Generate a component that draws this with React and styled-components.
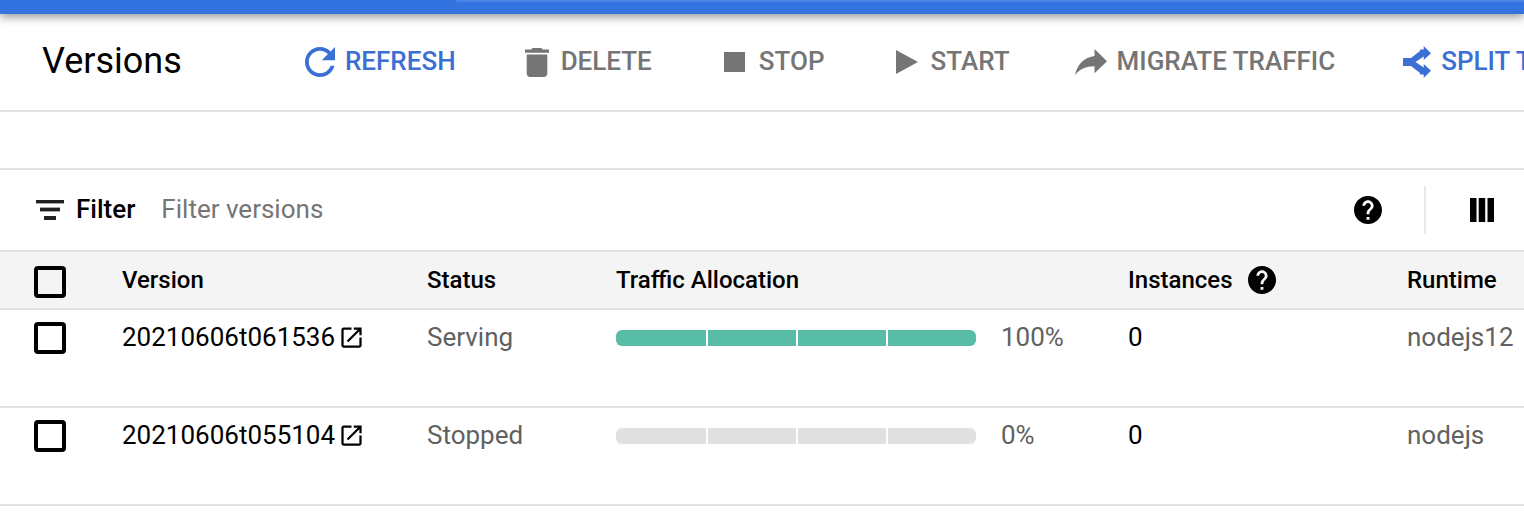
import React from "react";
import styled, { createGlobalStyle } from "styled-components";

const Global = createGlobalStyle`
  html, body { margin: 0; padding: 0; background: #fff; }
  body { font-family: Roboto, "Liberation Sans", sans-serif; overflow: hidden; width: 1524px; height: 530px; }
`;

const Page = styled.div`
  width: 1524px;
  height: 530px;
  overflow: hidden;
  position: relative;
`;

const TopBar = styled.div`
  height: 14px;
  background: #3273e0;
  box-shadow: 0 3px 10px rgba(0, 0, 0, 0.42);
  position: relative;
  &::after {
    content: "";
    position: absolute;
    left: 456px;
    right: 0;
    top: 0;
    height: 2px;
    background: #4a85e6;
    border-bottom-left-radius: 4px;
  }
`;

const Toolbar = styled.div`
  height: 96px;
  display: flex;
  align-items: center;
  border-bottom: 2px solid #e0e0e0;
  white-space: nowrap;
`;

const Title = styled.h1`
  margin: 0 0 2px;
  width: 305px;
  flex: none;
  box-sizing: border-box;
  padding-left: 42px;
  font-size: 36px;
  font-weight: 400;
  color: #000;
`;

const Action = styled.div`
  display: flex;
  align-items: center;
  flex: none;
  margin-right: ${(p) => p.$after}px;
  color: ${(p) => (p.$active ? "#3b6fd4" : "#757575")};
  font-size: 26px;
  font-weight: 500;
`;

const ActionIcon = styled.svg`
  width: ${(p) => p.$w}px;
  height: ${(p) => p.$h}px;
  margin-right: ${(p) => p.$gap}px;
  fill: currentColor;
  flex: none;
`;

const ActionLabel = styled.span`
  margin-bottom: 2px;
`;

const Spacer = styled.div`
  height: 56px;
  border-bottom: 2px solid #e0e0e0;
`;

const FilterRow = styled.div`
  height: 80px;
  display: flex;
  align-items: center;
  border-bottom: 2px solid #e0e0e0;
  padding-left: 36px;
  padding-right: 30px;
`;

const FilterIcon = styled.svg`
  width: 28px;
  height: 20px;
  fill: #212121;
  flex: none;
`;

const FilterLabel = styled.span`
  margin: 0 0 2px 12px;
  font-size: 26px;
  font-weight: 500;
  color: #000;
`;

const FilterHint = styled.span`
  margin: 0 0 2px 26px;
  font-size: 26px;
  color: #757575;
  flex: 1;
`;

const Help = styled.svg`
  width: 28px;
  height: 28px;
  fill: #000;
  flex: none;
  margin-left: ${(p) => p.$left || 0}px;
`;

const Divider = styled.div`
  width: 2px;
  height: 48px;
  background: #e8e8e8;
  margin: 0 44px 0 42px;
`;

const Columns = styled.svg`
  width: 24px;
  height: 24px;
  fill: #000;
  flex: none;
`;

const TableRow = styled.div`
  display: grid;
  grid-template-columns: 122px 305px 189px 512px 279px 1fr;
  box-sizing: border-box;
  border-bottom: 2px solid #e0e0e0;
  height: ${(p) => (p.$head ? 58 : 98)}px;
  background: ${(p) => (p.$head ? "#f4f4f4" : "#fff")};
  align-items: ${(p) => (p.$head ? "center" : "start")};
  font-size: ${(p) => (p.$head ? 24 : 26)}px;
  white-space: nowrap;
`;

const Cell = styled.div`
  display: flex;
  align-items: center;
  height: ${(p) => (p.$head ? "auto" : "54px")};
  font-weight: ${(p) => (p.$head ? 500 : 400)};
  color: ${(p) => (p.$head || p.$dark ? "#000" : "#616161")};
`;

const CheckCell = styled.div`
  display: flex;
  align-items: center;
  padding-left: 34px;
  padding-top: ${(p) => (p.$head ? "4px" : "0")};
  height: ${(p) => (p.$head ? "auto" : "56px")};
`;

const Checkbox = styled.span`
  display: block;
  box-sizing: border-box;
  width: 32px;
  height: 32px;
  border: 4px solid #000;
  border-radius: 4px;
`;

const External = styled.svg`
  width: 27px;
  height: 27px;
  margin-left: 3px;
  fill: #000;
  flex: none;
`;

const Bar = styled.div`
  width: 360px;
  height: 16px;
  display: flex;
  gap: 2px;
  border-radius: 6px;
  overflow: hidden;
  flex: none;
  margin-top: 2px;
`;

const Segment = styled.div`
  flex: 1;
  background: ${(p) => (p.$on ? "#57bda6" : "#e0e0e0")};
  &:first-child {
    flex: none;
    width: 90px;
  }
`;

const Percent = styled.span`
  margin-left: 25px;
  color: #616161;
`;

const HELP =
  "M12 2C6.48 2 2 6.48 2 12s4.48 10 10 10 10-4.48 10-10S17.52 2 12 2zm1 17h-2v-2h2v2zm2.07-7.75l-.9.92C13.45 12.9 13 13.5 13 15h-2v-.5c0-1.1.45-2.1 1.17-2.83l1.24-1.26c.37-.36.59-.86.59-1.41 0-1.1-.9-2-2-2s-2 .9-2 2H8c0-2.21 1.79-4 4-4s4 1.79 4 4c0 .88-.36 1.68-.93 2.25z";
const OPEN =
  "M19 19H5V5h7V3H5c-1.11 0-2 .9-2 2v14c0 1.1.89 2 2 2h14c1.1 0 2-.9 2-2v-7h-2v7zM14 3v2h3.59l-9.83 9.83 1.41 1.41L19 6.41V10h2V3h-7z";

const actions = [
  { label: "REFRESH", active: true, w: 30, h: 30, gap: 10, after: 69, box: "4 4 16 16", d: "M17.65 6.35C16.2 4.9 14.21 4 12 4c-4.42 0-7.99 3.58-7.99 8s3.57 8 7.99 8c3.73 0 6.84-2.55 7.73-6h-2.08c-.82 2.33-3.04 4-5.65 4-3.31 0-6-2.69-6-6s2.69-6 6-6c1.66 0 3.14.69 4.22 1.78L13 11h7V4l-2.35 2.35z" },
  { label: "DELETE", w: 24, h: 29, gap: 12, after: 72, box: "5 3 14 18", d: "M6 19c0 1.1.9 2 2 2h8c1.1 0 2-.9 2-2V7H6v12zM19 4h-3.5l-1-1h-5l-1 1H5v2h14V4z" },
  { label: "STOP", w: 21, h: 20, gap: 14, after: 71, box: "6 6 12 12", d: "M6 6h12v12H6z" },
  { label: "START", w: 22, h: 24, gap: 13, after: 65, box: "8 5 11 14", d: "M8 5v14l11-7z" },
  { label: "MIGRATE TRAFFIC", w: 32, h: 26, gap: 10, after: 68, box: "3 5 18 15", d: "M14 9V5l7 7-7 7v-4.1c-5 0-8.5 1.6-11 5.1 1-5 4-10 11-11z" },
  { label: "SPLIT TRAFFIC", active: true, w: 28, h: 32, gap: 10, after: 0, box: "0 0 28 32", d: "M0 12H8L17 5V3.5H20.7V0L28 7.3 20.7 14V10.5L12.5 16 20.7 21.5V18L28 24.7 20.7 32V28.5H17V27L8 20H0Z" },
];

const rows = [
  { version: "20210606t061536", status: "Serving", on: true, pct: "100%", instances: "0", runtime: "nodejs12" },
  { version: "20210606t055104", status: "Stopped", on: false, pct: "0%", instances: "0", runtime: "nodejs" },
];

export default function App() {
  return (
    <Page>
      <Global />
      <TopBar />
      <Toolbar>
        <Title>Versions</Title>
        {actions.map((a) => (
          <Action key={a.label} $active={a.active} $after={a.after}>
            <ActionIcon viewBox={a.box} preserveAspectRatio="none" $w={a.w} $h={a.h} $gap={a.gap}>
              <path d={a.d} />
            </ActionIcon>
            <ActionLabel>{a.label}</ActionLabel>
          </Action>
        ))}
      </Toolbar>
      <Spacer />
      <FilterRow>
        <FilterIcon viewBox="0 0 28 20">
          <rect x="0" y="0" width="28" height="3.4" />
          <rect x="4" y="7.6" width="20" height="3.8" />
          <rect x="8" y="16" width="12" height="4" />
        </FilterIcon>
        <FilterLabel>Filter</FilterLabel>
        <FilterHint>Filter versions</FilterHint>
        <Help viewBox="2 2 20 20"><path d={HELP} /></Help>
        <Divider />
        <Columns viewBox="0 0 24 24">
          <rect x="0" y="0" width="6.5" height="24" />
          <rect x="8.7" y="0" width="6.5" height="24" />
          <rect x="17.5" y="0" width="6.5" height="24" />
        </Columns>
      </FilterRow>
      <TableRow $head>
        <CheckCell $head><Checkbox /></CheckCell>
        <Cell $head>Version</Cell>
        <Cell $head>Status</Cell>
        <Cell $head>Traffic Allocation</Cell>
        <Cell $head>
          Instances
          <Help viewBox="2 2 20 20" $left={15}><path d={HELP} /></Help>
        </Cell>
        <Cell $head>Runtime</Cell>
      </TableRow>
      {rows.map((r) => (
        <TableRow key={r.version}>
          <CheckCell><Checkbox /></CheckCell>
          <Cell $dark>
            {r.version}
            <External viewBox="0 0 24 24"><path d={OPEN} /></External>
          </Cell>
          <Cell>{r.status}</Cell>
          <Cell>
            <Bar>{[0, 1, 2, 3].map((i) => <Segment key={i} $on={r.on} />)}</Bar>
            <Percent>{r.pct}</Percent>
          </Cell>
          <Cell $dark>{r.instances}</Cell>
          <Cell>{r.runtime}</Cell>
        </TableRow>
      ))}
    </Page>
  );
}
